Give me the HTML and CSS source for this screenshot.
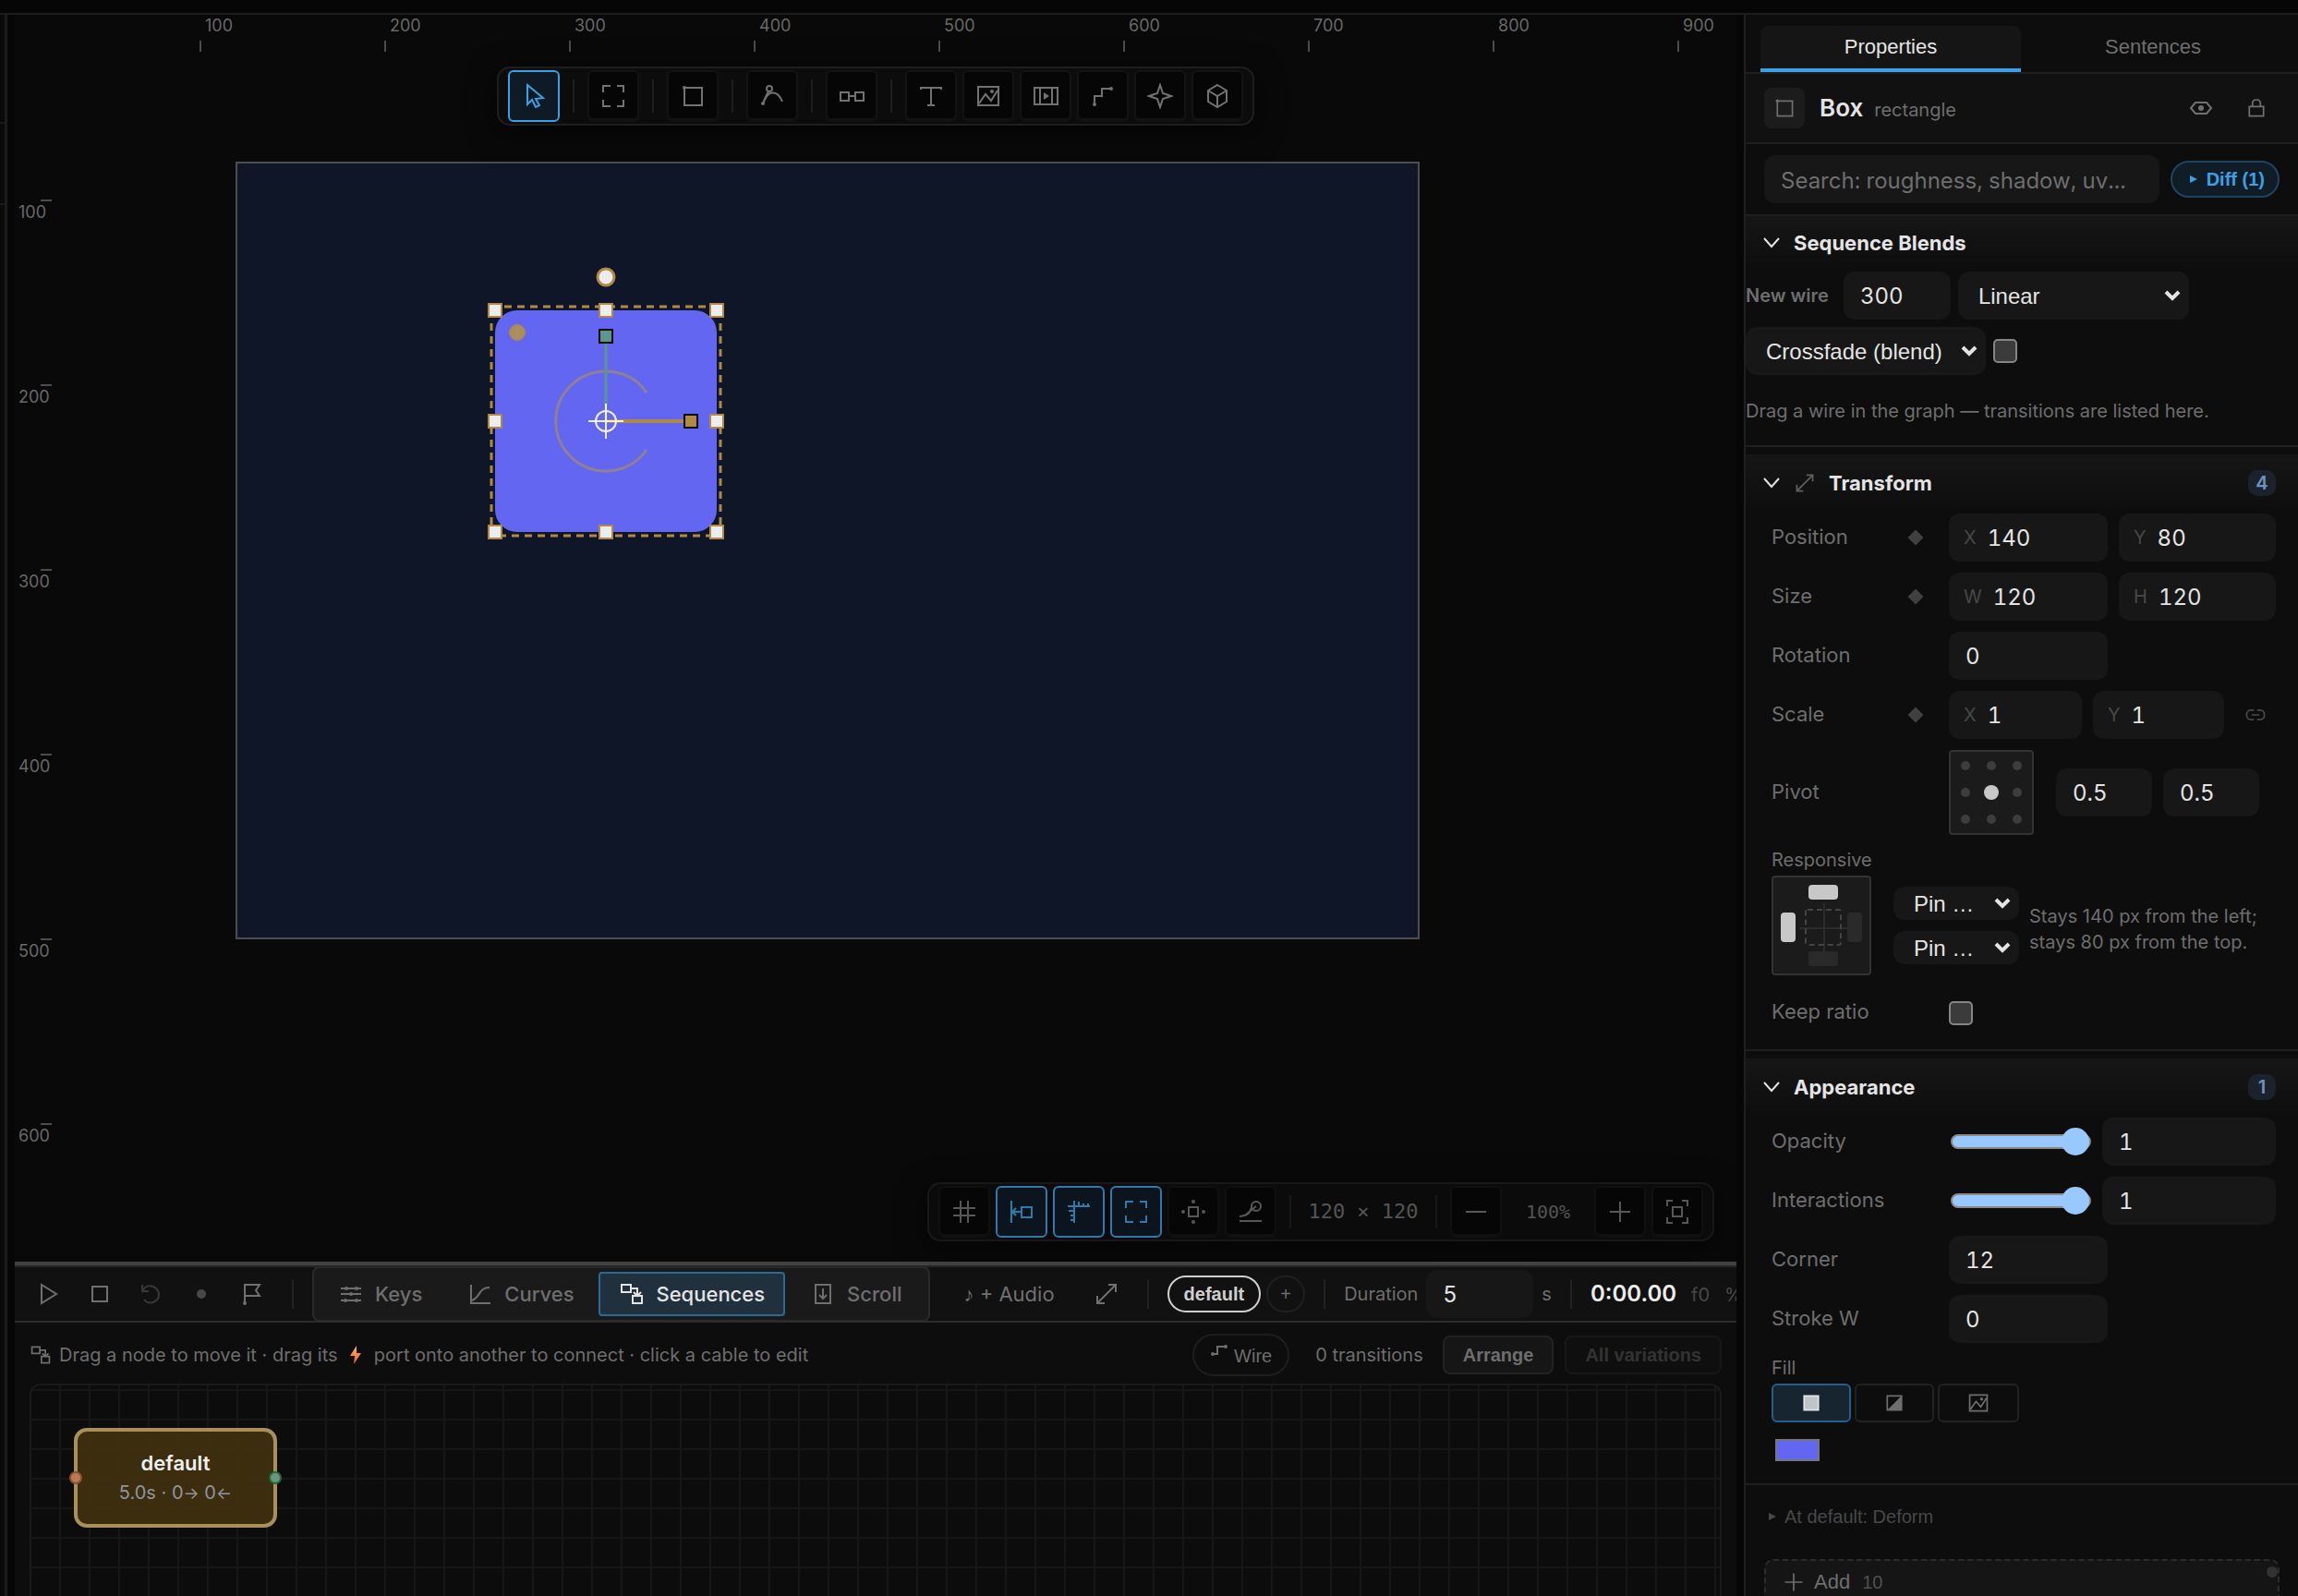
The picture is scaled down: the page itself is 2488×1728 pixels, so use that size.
FILE: index.html
```html
<!DOCTYPE html>
<html lang="en">
<head>
<meta charset="utf-8">
<title>Box – Properties</title>
<link rel="stylesheet" href="styles.css">
</head>
<body>
<svg class="sprite" aria-hidden="true">
  <symbol id="i-cursor" viewBox="0 0 28 28"><path d="M7 2v21l5-5 4 8 4-2-4-7 8-1z"/></symbol>
  <symbol id="i-frame" viewBox="0 0 28 28"><path d="M3 10V3h8M18 3h7v7M25 18v7h-7M11 25H3v-7"/></symbol>
  <symbol id="i-rect" viewBox="0 0 28 28"><path d="M5 5h19v19H5z"/><circle class="solid" cx="5" cy="5" r="2"/></symbol>
  <symbol id="i-pen" viewBox="0 0 28 28"><circle cx="11" cy="6" r="3"/><path d="M4 22C7 16 9 11 14 10.500S23 15 25 20M5 19L10 9"/><circle class="solid" cx="4" cy="22" r="2"/></symbol>
  <symbol id="i-link-boxes" viewBox="0 0 28 28"><path d="M2 10h9v9H2zM18 10h9v9h-9zM11 14h7"/></symbol>
  <symbol id="i-text" viewBox="0 0 28 28"><path d="M3 7V5h22v2M14 5v19M10 24h8"/></symbol>
  <symbol id="i-image" viewBox="0 0 28 28"><path d="M3 4h22v20H3zM4 22l7-10 6 7 7-11"/><circle class="solid" cx="18" cy="9" r="2"/></symbol>
  <symbol id="i-film" viewBox="0 0 28 28"><path d="M2 5h25v18H2zM8 5v18M21 5v18"/><path class="solid" d="M12 10l6 4-6 4z"/></symbol>
  <symbol id="i-step" viewBox="0 0 28 28"><path d="M5 23v-9h8V6h10"/><circle class="solid" cx="5" cy="23" r="2"/><circle class="solid" cx="23" cy="6" r="2"/></symbol>
  <symbol id="i-wire" viewBox="0 0 20 20"><path d="M3 14h5V6h9"/><circle class="solid" cx="3" cy="14" r="2"/><circle class="solid" cx="17" cy="6" r="2"/></symbol>
  <symbol id="i-star" viewBox="0 0 28 28"><path d="M14 2l3 9 9 3-9 3-3 9-3-9-9-3 9-3z"/></symbol>
  <symbol id="i-cube" viewBox="0 0 28 28"><path d="M14 2l10 6v12l-10 6-10-6V8zM4 8l10 6 10-6M14 14v12"/></symbol>
  <symbol id="i-grid" viewBox="0 0 28 28"><path d="M10 2v24M18 2v24M2 10h24M2 18h24"/></symbol>
  <symbol id="i-snap" viewBox="0 0 28 28"><path d="M3 2v24M14 9h11v11H14zM14 14H4M8 10l-4 4 4 4"/></symbol>
  <symbol id="i-ruler" viewBox="0 0 28 28"><path d="M2 8h24M9 2v24M9 8V2M14 8V3M19 8V5M24 8V5M9 13H3M9 18H5M9 23H5"/></symbol>
  <symbol id="i-center" viewBox="0 0 28 28"><path d="M9 9h10v10H9z"/><circle class="solid" cx="14" cy="3" r="2"/><circle class="solid" cx="14" cy="25" r="2"/><circle class="solid" cx="3" cy="14" r="2"/><circle class="solid" cx="25" cy="14" r="2"/></symbol>
  <symbol id="i-ease" viewBox="0 0 28 28"><path d="M2 24h24M2 19C12 18 14 14 15 9"/><circle cx="20" cy="8" r="5"/><path d="M20 8L9 17"/></symbol>
  <symbol id="i-minus" viewBox="0 0 28 28"><path d="M3 14h22"/></symbol>
  <symbol id="i-plus" viewBox="0 0 28 28"><path d="M3 14h22M14 3v22"/></symbol>
  <symbol id="i-fit" viewBox="0 0 28 28"><path d="M3 8V2h6M19 2h6v6M25 20v6h-6M9 26H3v-6M9 9h10v10H9z"/></symbol>
  <symbol id="i-play" viewBox="0 0 28 28"><path d="M6 4l16 10L6 24z"/></symbol>
  <symbol id="i-stop" viewBox="0 0 28 28"><path d="M6 6h16v16H6z"/></symbol>
  <symbol id="i-undo" viewBox="0 0 28 28"><path d="M5 4v7h7M5 11c3-6 10-8 15-3 4 4 4 10 0 13-4 4-10 3-13-1"/></symbol>
  <symbol id="i-dot" viewBox="0 0 28 28"><circle class="solid" cx="14" cy="14" r="5"/></symbol>
  <symbol id="i-flag" viewBox="0 0 28 28"><path d="M6 23V4h16l-4 6 4 6H6"/><circle class="solid" cx="6" cy="24" r="2"/></symbol>
  <symbol id="i-keys" viewBox="0 0 28 28"><path d="M3 8h22M3 14h22M3 21h22"/><circle class="solid" cx="9" cy="8" r="2"/><circle class="solid" cx="20" cy="8" r="2"/><circle class="solid" cx="14" cy="14" r="2"/><circle class="solid" cx="8" cy="21" r="2"/><circle class="solid" cx="20" cy="21" r="2"/></symbol>
  <symbol id="i-curve" viewBox="0 0 28 28"><path d="M4 4v20h21M5 21C14 18 12 7 24 7"/></symbol>
  <symbol id="i-seq" viewBox="0 0 28 28"><path d="M3 4h10v8H3zM15 16h10v8H15zM13 8h7v8M16 12l4 4 4-4"/></symbol>
  <symbol id="i-scroll" viewBox="0 0 28 28"><path d="M6 4h16v20H6zM14 8v11M10 15l4 4 4-4"/></symbol>
  <symbol id="i-expand" viewBox="0 0 28 28"><path d="M16 4h8v8M24 4L4 24M4 16v8h8"/></symbol>
  <symbol id="i-eye" viewBox="0 0 28 28"><path d="M3 14l5-6h12l5 6-5 6H8z"/><circle class="solid" cx="14" cy="14" r="3"/></symbol>
  <symbol id="i-lock" viewBox="0 0 28 28"><path d="M5 12h18v12H5zM9 12V8c0-6 10-6 10 0v4"/></symbol>
  <symbol id="i-chain" viewBox="0 0 28 28"><path d="M12 8H8c-7 0-7 12 0 12h4M16 8h4c7 0 7 12 0 12h-4M9 14h10"/></symbol>
  <symbol id="i-chev" viewBox="0 0 20 20"><path d="M2 5l8 9 8-9"/></symbol>
  <symbol id="i-solidfill" viewBox="0 0 28 28"><path fill="#c0c4c8" d="M5 5h18v18H5z"/></symbol>
  <symbol id="i-gradfill" viewBox="0 0 28 28"><path d="M5 5h18v18H5z"/><path class="solid" d="M23 5v18H5z"/></symbol>
</svg>

<header class="topbar"></header>
<div class="shell">
  <aside class="rail"></aside>

  <main class="center">
    <section class="stage" aria-label="Canvas">
      <svg class="canvas">
        <g class="ruler-ticks">
          <path d="M201 28v12M401 28v12M601 28v12M801 28v12M1001 28v12M1201 28v12M1401 28v12M1601 28v12M1801 28v12"/>
          <path d="M28 201h12M28 401h12M28 601h12M28 801h12M28 1001h12M28 1201h12"/>
        </g>
        <g class="ruler-text">
          <text x="206" y="18">100</text><text x="406" y="18">200</text><text x="606" y="18">300</text><text x="806" y="18">400</text><text x="1006" y="18">500</text><text x="1206" y="18">600</text><text x="1406" y="18">700</text><text x="1606" y="18">800</text><text x="1806" y="18">900</text>
          <text x="4" y="220">100</text><text x="4" y="420">200</text><text x="4" y="620">300</text><text x="4" y="820">400</text><text x="4" y="1020">500</text><text x="4" y="1220">600</text>
        </g>
        <rect class="artboard" x="240" y="160" width="1280" height="840"/>
        <rect x="520" y="320" width="240" height="240" rx="24" fill="#6366f1"/>
        <rect class="marquee" x="516" y="316" width="248" height="248"/>
        <path class="arc" d="M684 409A54 54 0 1 0 684 471"/>
        <path d="M640 356V440" stroke="#5c958c" stroke-width="3"/>
        <path d="M640 440H724" stroke="#b08847" stroke-width="4"/>
        <rect x="633" y="341" width="14" height="14" fill="#5c958c" stroke="#0a0a0a" stroke-width="2"/>
        <rect x="725" y="433" width="14" height="14" fill="#b08847" stroke="#0a0a0a" stroke-width="2"/>
        <circle cx="544" cy="344" r="8" fill="#a98f62" stroke="#b08847" stroke-width="2"/>
        <circle cx="640" cy="284" r="9" fill="#ececec" stroke="#b08847" stroke-width="3"/>
        <g class="handles">
          <rect x="513" y="313" width="14" height="14"/><rect x="633" y="313" width="14" height="14"/><rect x="753" y="313" width="14" height="14"/>
          <rect x="513" y="433" width="14" height="14"/><rect x="753" y="433" width="14" height="14"/>
          <rect x="513" y="553" width="14" height="14"/><rect x="633" y="553" width="14" height="14"/><rect x="753" y="553" width="14" height="14"/>
        </g>
        <g class="pivot-mark"><circle cx="640" cy="440" r="11"/><path d="M621 440h38M640 421v38"/></g>
      </svg>

      <div class="toolbar tools" role="toolbar" aria-label="Tools">
        <button class="tool on" aria-label="Select"><svg class="ico"><use href="#i-cursor"/></svg></button><i class="sep"></i>
        <button class="tool" aria-label="Frame"><svg class="ico"><use href="#i-frame"/></svg></button><i class="sep"></i>
        <button class="tool" aria-label="Rectangle"><svg class="ico"><use href="#i-rect"/></svg></button><i class="sep"></i>
        <button class="tool" aria-label="Pen"><svg class="ico"><use href="#i-pen"/></svg></button><i class="sep"></i>
        <button class="tool" aria-label="Connect"><svg class="ico"><use href="#i-link-boxes"/></svg></button><i class="sep"></i>
        <button class="tool" aria-label="Text"><svg class="ico"><use href="#i-text"/></svg></button>
        <button class="tool" aria-label="Image"><svg class="ico"><use href="#i-image"/></svg></button>
        <button class="tool" aria-label="Video"><svg class="ico"><use href="#i-film"/></svg></button>
        <button class="tool" aria-label="Wire"><svg class="ico"><use href="#i-step"/></svg></button>
        <button class="tool" aria-label="Effects"><svg class="ico"><use href="#i-star"/></svg></button>
        <button class="tool" aria-label="3D"><svg class="ico"><use href="#i-cube"/></svg></button>
      </div>

      <div class="toolbar view" role="toolbar" aria-label="View">
        <button class="tool" aria-label="Grid"><svg class="ico"><use href="#i-grid"/></svg></button>
        <button class="tool on" aria-label="Snap"><svg class="ico"><use href="#i-snap"/></svg></button>
        <button class="tool on" aria-label="Rulers"><svg class="ico"><use href="#i-ruler"/></svg></button>
        <button class="tool on" aria-label="Bounds"><svg class="ico"><use href="#i-frame"/></svg></button>
        <button class="tool" aria-label="Center"><svg class="ico"><use href="#i-center"/></svg></button>
        <button class="tool" aria-label="Motion path"><svg class="ico"><use href="#i-ease"/></svg></button>
        <i class="sep"></i><span class="dims">120 × 120</span><i class="sep"></i>
        <button class="tool" aria-label="Zoom out"><svg class="ico"><use href="#i-minus"/></svg></button>
        <span class="zoom">100%</span>
        <button class="tool" aria-label="Zoom in"><svg class="ico"><use href="#i-plus"/></svg></button>
        <button class="tool" aria-label="Fit"><svg class="ico"><use href="#i-fit"/></svg></button>
      </div>
    </section>

    <section class="timeline" aria-label="Timeline">
      <div class="transport">
        <div class="playback">
          <button class="bare" aria-label="Play"><svg class="ico"><use href="#i-play"/></svg></button>
          <button class="bare" aria-label="Stop"><svg class="ico"><use href="#i-stop"/></svg></button>
          <button class="bare faint" aria-label="Loop"><svg class="ico"><use href="#i-undo"/></svg></button>
          <button class="bare dim" aria-label="Record"><svg class="ico"><use href="#i-dot"/></svg></button>
          <button class="bare" aria-label="Marker"><svg class="ico"><use href="#i-flag"/></svg></button>
        </div>
        <i class="vsep"></i>
        <div class="segments">
          <button class="seg"><svg class="ico"><use href="#i-keys"/></svg>Keys</button>
          <button class="seg"><svg class="ico"><use href="#i-curve"/></svg>Curves</button>
          <button class="seg on"><svg class="ico"><use href="#i-seq"/></svg>Sequences</button>
          <button class="seg"><svg class="ico"><use href="#i-scroll"/></svg>Scroll</button>
        </div>
        <button class="bare audio">♪ + Audio</button>
        <button class="bare" aria-label="Expand"><svg class="ico"><use href="#i-expand"/></svg></button>
        <i class="vsep"></i>
        <div class="pills"><button class="pill on">default</button><button class="pill add" aria-label="Add sequence">+</button></div>
        <i class="vsep"></i>
        <label class="duration"><span>Duration</span><input class="field" type="text" value="5"><span>s</span></label>
        <i class="vsep"></i>
        <div class="clock"><output class="time">0:00.00</output><span>f0</span><span>%</span></div>
      </div>
      <div class="hint">
        <svg class="ico small"><use href="#i-seq"/></svg>
        <p>Drag a node to move it · drag its
          <svg class="bolt" viewBox="0 0 12 20"><defs><linearGradient id="bolt" x2="0" y2="1"><stop offset="0" stop-color="#ffb84d"/><stop offset="1" stop-color="#f0524a"/></linearGradient></defs><path fill="url(#bolt)" d="M7 0L0 11h5L4 20 12 8H7z"/></svg>
          port onto another to connect · click a cable to edit</p>
        <button class="wire"><svg class="ico"><use href="#i-wire"/></svg>Wire</button>
        <span class="count">0 transitions</span>
        <button class="btn">Arrange</button>
        <button class="btn" disabled>All variations</button>
      </div>
      <div class="graph">
        <div class="node"><strong>default</strong><span>5.0s · 0<small>→</small> 0<small>←</small></span><i class="port in"></i><i class="port out"></i></div>
      </div>
    </section>
  </main>

  <aside class="panel">
    <nav class="tabs"><button class="tab on">Properties</button><button class="tab">Sentences</button></nav>
    <div class="object">
      <span class="tile"><svg class="ico small"><use href="#i-rect"/></svg></span>
      <h1>Box</h1><span class="kind">rectangle</span>
      <button class="bare eye" aria-label="Visibility"><svg class="ico"><use href="#i-eye"/></svg></button>
      <button class="bare" aria-label="Lock"><svg class="ico small"><use href="#i-lock"/></svg></button>
    </div>
    <div class="search">
      <input class="field" type="text" aria-label="Search properties" placeholder="Search: roughness, shadow, uv...">
      <button class="diff"><svg viewBox="0 0 8 8"><path d="M0 0l8 4-8 4z"/></svg>Diff (1)</button>
    </div>

    <section class="group first">
      <h2><svg class="chev"><use href="#i-chev"/></svg>Sequence Blends</h2>
      <div class="blend">
        <label for="wire">New wire</label>
        <input id="wire" class="field ms" type="text" value="300">
        <span class="select easing"><select aria-label="Easing"><option>Linear</option></select><svg viewBox="0 0 18 12"><path d="M2 2l7 7 7-7"/></svg></span>
      </div>
      <div class="blend">
        <span class="select mode"><select aria-label="Blend mode"><option>Crossfade (blend)</option></select><svg viewBox="0 0 18 12"><path d="M2 2l7 7 7-7"/></svg></span>
        <input type="checkbox" aria-label="Blend">
      </div>
      <p class="note">Drag a wire in the graph — transitions are listed here.</p>
    </section>

    <section class="group">
      <h2><svg class="chev"><use href="#i-chev"/></svg><svg class="ico small"><use href="#i-expand"/></svg>Transform<span class="badge">4</span></h2>
      <div class="rows">
        <div class="row"><span class="name">Position</span><i class="key"></i><div class="cells"><label class="field">X<input type="text" value="140"></label><label class="field">Y<input type="text" value="80"></label></div></div>
        <div class="row"><span class="name">Size</span><i class="key"></i><div class="cells"><label class="field">W<input type="text" value="120"></label><label class="field">H<input type="text" value="120"></label></div></div>
        <div class="row"><label class="name" for="rot">Rotation</label><div class="cells"><input id="rot" class="field" type="text" value="0"></div></div>
        <div class="row"><span class="name">Scale</span><i class="key"></i><div class="cells linked"><label class="field">X<input type="text" value="1"></label><label class="field">Y<input type="text" value="1"></label><button class="bare dim" aria-label="Link scale"><svg class="ico small"><use href="#i-chain"/></svg></button></div></div>
        <div class="row"><span class="name">Pivot</span><div class="pivot"><div class="pad nine"><i></i><i></i><i></i><i></i><i class="on"></i><i></i><i></i><i></i><i></i></div><div class="pair"><input class="field" type="text" aria-label="Pivot X" value="0.5"><input class="field" type="text" aria-label="Pivot Y" value="0.5"></div></div></div>
      </div>
      <h3>Responsive</h3>
      <div class="responsive">
        <svg class="pad pins" viewBox="0 0 104 104"><path d="M55 28v52M28 55h52" stroke="#2c2c2c" stroke-width="2"/><rect x="35" y="35" width="38" height="38" rx="2" fill="none" stroke="#444" stroke-width="2" stroke-dasharray="6 4"/><rect x="38" y="8" width="32" height="16" rx="4" fill="#c8c8c8"/><rect x="8" y="38" width="16" height="32" rx="4" fill="#c8c8c8"/><rect x="80" y="38" width="16" height="32" rx="4" fill="#2a2a2a"/><rect x="38" y="80" width="32" height="16" rx="4" fill="#2a2a2a"/></svg>
        <div class="pinsel">
          <span class="select"><select aria-label="Horizontal pin"><option>Pin …</option></select><svg viewBox="0 0 18 12"><path d="M2 2l7 7 7-7"/></svg></span>
          <span class="select"><select aria-label="Vertical pin"><option>Pin …</option></select><svg viewBox="0 0 18 12"><path d="M2 2l7 7 7-7"/></svg></span>
        </div>
        <p>Stays 140 px from the left; stays 80 px from the top.</p>
      </div>
      <div class="row keep"><label class="name" for="ratio">Keep ratio</label><input id="ratio" type="checkbox"></div>
    </section>

    <section class="group">
      <h2><svg class="chev"><use href="#i-chev"/></svg>Appearance<span class="badge">1</span></h2>
      <div class="rows">
        <div class="row"><label class="name" for="op">Opacity</label><div class="slide"><input id="op" type="range" min="0" max="1" value="1"><input class="field" type="text" aria-label="Opacity value" value="1"></div></div>
        <div class="row"><label class="name" for="ia">Interactions</label><div class="slide"><input id="ia" type="range" min="0" max="1" value="1"><input class="field" type="text" aria-label="Interactions value" value="1"></div></div>
        <div class="row"><label class="name" for="co">Corner</label><div class="cells"><input id="co" class="field" type="text" value="12"></div></div>
        <div class="row"><label class="name" for="sw">Stroke W</label><div class="cells"><input id="sw" class="field" type="text" value="0"></div></div>
      </div>
      <h3>Fill</h3>
      <div class="fills">
        <button class="on" aria-label="Solid"><svg class="ico small"><use href="#i-solidfill"/></svg></button>
        <button aria-label="Gradient"><svg class="ico small"><use href="#i-gradfill"/></svg></button>
        <button aria-label="Image"><svg class="ico small"><use href="#i-image"/></svg></button>
      </div>
      <button class="swatch" aria-label="Fill colour"></button>
    </section>

    <button class="deform"><svg viewBox="0 0 8 8"><path d="M0 0l8 4-8 4z"/></svg>At default: Deform</button>
    <button class="addbox"><svg class="ico small"><use href="#i-plus"/></svg>Add<span>10</span><i></i></button>
  </aside>
</div>
</body>
</html>
```
FILE: styles.css
```css
:root {
  --line: #1f1f1f;
  --bg: #0d0d0d;
  --field: #171717;
  --muted: #6e6e6e;
  --bright: #e4e4e4;
  --blue: #3ba0e6;
  --ui: "Liberation Sans", Arial, sans-serif;
}
* { box-sizing: border-box; }
body {
  margin: 0;
  height: 100vh;
  overflow: hidden;
  display: flex;
  flex-direction: column;
  background: #060606;
  color: var(--muted);
  font: 20px/28px Inter, "Noto Sans", sans-serif;
}
button, input, select { font: inherit; color: inherit; margin: 0; padding: 0; border: 0; background: none; outline: 0; }
h1, h2, h3, p { margin: 0; font-size: inherit; font-weight: inherit; }
.sprite { position: absolute; width: 0; height: 0; }
.ico, .chev { flex: none; display: block; width: 28px; height: 28px; fill: none; stroke: currentColor; stroke-width: 2; }
.ico.small { width: 24px; height: 24px; }
.chev { width: 20px; height: 20px; }
.solid { fill: currentColor; stroke: none; }

.topbar { flex: none; height: 16px; border-bottom: 2px solid #1c1c1c; }
.shell { flex: 1; min-height: 0; display: grid; grid-template-columns: 8px minmax(0, 1fr) 600px; column-gap: 8px; }
.rail { border-right: 3px solid #1c1c1c; background: linear-gradient(#1a1a1a, #1a1a1a) 0 116px / 100% 2px no-repeat, linear-gradient(#1a1a1a, #1a1a1a) 0 204px / 100% 2px no-repeat, #0a0a0a; }
.center { display: flex; flex-direction: column; min-width: 0; min-height: 0; }

/* canvas */
.stage { flex: 1; min-height: 0; position: relative; overflow: hidden; background: #090909; }
.canvas { display: block; width: 100%; height: 100%; }
.ruler-ticks { stroke: #4c4c4c; stroke-width: 2; }
.ruler-text { fill: #686868; font-size: 18px; }
.artboard { fill: #0e1628; stroke: #4a4e54; stroke-width: 2; }
.marquee { fill: none; stroke: #b08847; stroke-width: 3; stroke-dasharray: 8 6; }
.arc { fill: none; stroke: #908091; stroke-width: 3; }
.handles { fill: #ececec; stroke: #b08847; stroke-width: 2; }
.pivot-mark { fill: none; stroke: #f0f0f0; stroke-width: 2; }
.toolbar {
  position: absolute; display: flex; align-items: center; gap: 6px;
  padding: 2px 10px; border: 2px solid #1e1e1e; border-radius: 14px;
  background: #0c0c0c; box-shadow: 0 8px 32px rgba(0, 0, 0, .6);
}
.tools { top: 56px; left: 50%; transform: translateX(-50%); }
.view { right: 24px; bottom: 22px; opacity: .75; }
.tool { display: grid; place-items: center; width: 56px; height: 56px; border: 2px solid #131313; border-radius: 6px; background: #060606; box-shadow: inset 0 -2px #131313; color: #727272; }
.tool.on { border-color: var(--blue); background: #0e1a24; box-shadow: none; color: var(--blue); }
.sep { width: 2px; height: 36px; margin: 0 8px; background: #1e1e1e; }
.dims, .zoom { text-align: center; font-family: "DejaVu Sans Mono", monospace; }
.dims { width: 128px; font-size: 22px; }
.zoom { width: 88px; }

/* timeline */
.timeline { flex: none; height: 362px; display: flex; flex-direction: column; border-top: 4px solid #424242; background: var(--bg); }
.transport { flex: none; display: flex; align-items: center; height: 62px; border-top: 2px solid #262626; border-bottom: 2px solid #2c2c2c; background: #111; overflow: hidden; white-space: nowrap; }
.bare { display: flex; align-items: center; justify-content: center; color: #707070; }
.bare.dim { color: #484848; }
.bare.faint { color: #383838; }
.playback { display: flex; gap: 27px; margin: 0 29px 0 23px; }
.vsep { flex: none; width: 2px; height: 32px; background: #222; }
.segments { display: flex; align-items: center; gap: 5px; height: 60px; margin: 0 36px 0 20px; padding: 0 7px 0 4px; border: 2px solid #2a2a2a; border-radius: 8px; background: #1a1a1a; }
.seg { display: flex; align-items: center; gap: 12px; height: 48px; padding: 0 20px; border: 2px solid transparent; border-radius: 4px; font-size: 22px; font-weight: 500; }
.seg.on { border-color: #2a6a95; background: #20303c; color: var(--bright); }
.audio { margin-right: 42px; font-size: 22px; }
.bare + .vsep { margin-left: 30px; }
.pills { display: flex; gap: 6px; margin: 0 20px; }
.pill { height: 40px; padding: 0 16px; border: 2px solid #1f1f1f; border-radius: 20px; font-family: var(--ui); font-weight: 700; }
.pill.on { border-color: #cfcfcf; color: #cfcfcf; }
.pill.add { width: 42px; padding: 0; font-weight: 400; }
.duration { display: flex; align-items: center; margin: 0 20px; gap: 9px; }
.field { display: block; min-width: 0; width: 100%; height: 52px; padding: 0 18px; border-radius: 12px; background: var(--field); color: var(--bright); font-size: 24px; font-variant-numeric: tabular-nums; }
.duration .field { width: 116px; }
.clock { display: flex; align-items: baseline; gap: 16px; margin-left: 20px; color: #484848; }
.time { color: #ececec; font-size: 24px; font-weight: 600; }
.hint { flex: none; display: flex; align-items: center; height: 66px; padding: 3px 16px 0; }
.hint p { margin: 0 auto 0 8px; white-space: nowrap; }
.bolt { width: 12px; height: 20px; margin: 0 8px; vertical-align: -3px; }
.wire { display: flex; align-items: center; gap: 6px; height: 46px; padding: 2px 17px 0; border: 2px solid #1e1e1e; border-radius: 23px; font-family: var(--ui); }
.wire .ico { width: 20px; height: 20px; margin-bottom: 12px; }
.count { margin: 0 21px 0 28px; }
.btn { height: 42px; padding: 0 20px; border: 2px solid #232323; border-radius: 8px; background: #161616; font-family: var(--ui); font-weight: 700; }
.btn + .btn { margin-left: 12px; }
.btn:disabled { color: #333; border-color: #181818; background: #0f0f0f; }
.graph {
  flex: 1; position: relative; margin: 0 16px; border: 2px solid #1a1a1a; border-bottom: 0; border-radius: 12px 12px 0 0;
  background: linear-gradient(#171717 2px, transparent 2px) 0 4px / 32px 32px, linear-gradient(90deg, #171717 2px, transparent 2px) 30px 0 / 32px 32px, #0c0c0c;
}
.node { position: absolute; left: 46px; top: 46px; width: 220px; height: 108px; padding-top: 20px; border: 4px solid #a88f5e; border-radius: 14px; background: rgba(66, 50, 14, .88); text-align: center; color: #8f959f; }
.node strong { display: block; margin-bottom: 4px; color: #f0f0f0; font-size: 22px; font-weight: 600; }
.node span { display: block; }
.node small { font-size: 18px; }
.port { position: absolute; top: 43px; width: 14px; height: 14px; border: 2px solid #8a5230; border-radius: 50%; background: #b87a50; }
.port.in { left: -9px; }
.port.out { right: -9px; border-color: #1f6a40; background: #6a967c; }

/* properties panel */
.panel { display: flex; flex-direction: column; min-height: 0; overflow: hidden; border-left: 2px solid var(--line); background: var(--bg); }
.panel > * { flex: none; }
.tabs { display: grid; grid-template-columns: 1fr 1fr; gap: 2px; padding: 12px 16px 0; border-bottom: 2px solid var(--line); }
.tab { height: 50px; border-bottom: 4px solid transparent; border-radius: 8px 8px 0 0; font-family: var(--ui); font-size: 22px; }
.tab.on { border-color: var(--blue); background: #151515; color: var(--bright); }
.object { display: flex; align-items: center; height: 76px; padding: 0 24px 0 20px; border-bottom: 2px solid var(--line); background: #111; }
.tile { display: grid; place-items: center; width: 44px; height: 44px; border-radius: 8px; background: #1c1c1c; }
h1 { margin: 0 12px 0 16px; color: var(--bright); font-size: 26px; font-weight: 600; }
.kind { padding-top: 3px; }
.eye { margin: 0 34px 0 auto; }
.object .bare:last-child { margin-right: 9px; }
.search { display: flex; align-items: center; gap: 12px; height: 78px; padding: 0 20px; border-bottom: 2px solid var(--line); }
.search .field { flex: 1; padding-top: 2px; }
.search input::placeholder { color: #6e6e6e; opacity: 1; }
.diff { display: flex; align-items: center; gap: 10px; height: 40px; padding: 0 14px 0 19px; border: 2px solid #1f4460; border-radius: 20px; background: #101c26; color: var(--blue); font-family: var(--ui); font-weight: 700; }
.diff svg, .deform svg { width: 8px; height: 8px; fill: currentColor; }
.group { border-bottom: 2px solid var(--line); padding-top: 8px; }
.group.first { padding-top: 0; }
h2 { display: flex; align-items: center; height: 64px; padding: 0 24px 2px 18px; gap: 14px; background: linear-gradient(#161616, var(--bg)); color: var(--bright); font-size: 22px; font-weight: 700; }
.first h2 { height: 60px; }
h2 .ico { color: #606060; }
.badge { margin-left: auto; width: 30px; border-radius: 10px; background: #1c222b; color: #6f93bf; font-size: 20px; font-weight: 600; text-align: center; }
.blend { display: flex; align-items: center; gap: 8px; margin-bottom: 8px; }
.blend label { margin-right: 8px; font-weight: 600; }
.ms { width: 116px; }
.select { display: flex; position: relative; height: 52px; border-radius: 12px; background: var(--field); color: var(--bright); }
.select select { appearance: none; width: 100%; padding: 0 22px; font: 24px var(--ui); }
.select svg { position: absolute; right: 9px; top: 50%; width: 18px; height: 12px; margin-top: -6px; fill: none; stroke: currentColor; stroke-width: 4; pointer-events: none; }
.easing { width: 250px; }
.mode { width: 260px; }
input[type="checkbox"] { appearance: none; width: 26px; height: 26px; border: 2px solid #858585; border-radius: 5px; background: #3b3b3b; }
.note { padding: 17px 0 23px; }
.rows { display: grid; gap: 12px; padding: 0 24px 0 28px; }
.row { display: grid; grid-template-columns: 148px 44px minmax(0, 1fr); align-items: center; }
.row > :last-child { grid-column: 3; }
.name { font-size: 22px; padding-bottom: 2px; }
.key { width: 12px; height: 12px; margin-left: 2px; background: #404040; transform: rotate(45deg); }
.cells { display: grid; grid-template-columns: 172fr 170fr; gap: 12px; }
.cells.linked { grid-template-columns: 144fr 142fr 44px; }
label.field { display: flex; align-items: center; gap: 12px; padding: 0 16px; color: #484848; font-size: 20px; }
label.field input { flex: 1; min-width: 0; height: 100%; width: 100%; color: var(--bright); font-size: 24px; font-variant-numeric: inherit; }
.pivot { display: flex; align-items: center; gap: 24px; }
.pad { border: 2px solid #333; border-radius: 4px; background: #1b1b1b; }
.nine { display: grid; grid-template-columns: repeat(3, 1fr); place-items: center; width: 92px; height: 92px; padding: 2px; }
.nine i { width: 10px; height: 10px; border-radius: 50%; background: #3d3d3d; }
.nine i.on { width: 16px; height: 16px; background: #c8c8c8; }
.pair { display: grid; grid-template-columns: 104px 104px; gap: 12px; }
h3 { margin: 13px 28px 3px; }
.responsive { display: flex; align-items: center; padding: 0 24px 0 28px; }
.responsive p { padding-top: 8px; }
.pins { flex: none; width: 108px; height: 108px; }
.pinsel { flex: none; display: grid; gap: 12px; width: 136px; margin: 0 11px 0 24px; }
.pinsel .select { height: 36px; }
.keep { padding: 0 28px; margin: 26px 0 24px; }
.keep .name { padding-bottom: 4px; line-height: 26px; }
.slide { display: grid; grid-template-columns: 1fr 188px; gap: 12px; align-items: center; }
input[type="range"] { appearance: none; width: 152px; height: 30px; margin-left: 2px; }
input[type="range"]::-webkit-slider-runnable-track { height: 16px; border: 2px solid #8a8a8a; border-radius: 8px; background: #99c8ff; }
input[type="range"]::-webkit-slider-thumb { appearance: none; width: 30px; height: 30px; margin: -9px -2px 0 0; border-radius: 50%; background: #99c8ff; }
.fills { display: grid; grid-template-columns: 86px 86px 88px; gap: 4px; padding: 0 28px; }
.fills button { display: grid; place-items: center; height: 42px; border: 2px solid #222; border-radius: 6px; }
.fills .on { border-color: #235f8a; background: #172530; color: #e4e4e4; }
.swatch { display: block; width: 48px; height: 24px; margin: 18px 32px 24px; border: 2px solid #777; background: #6366f1; }
.deform { display: flex; align-items: center; gap: 9px; height: 64px; padding: 4px 0 0 25px; color: #484848; font-family: var(--ui); }
.addbox { position: relative; display: flex; align-items: center; height: 60px; margin: 16px 20px 0; padding: 0 18px 10px; border: 2px dashed #2c2c2c; border-radius: 10px; background: #151515; font-family: var(--ui); font-size: 22px; }
.addbox .ico { margin-right: 10px; }
.addbox span { margin-left: 13px; font-size: 20px; color: #505050; }
.addbox i { position: absolute; right: 0; top: 6px; width: 12px; height: 12px; border-radius: 50%; background: #333; }
```
